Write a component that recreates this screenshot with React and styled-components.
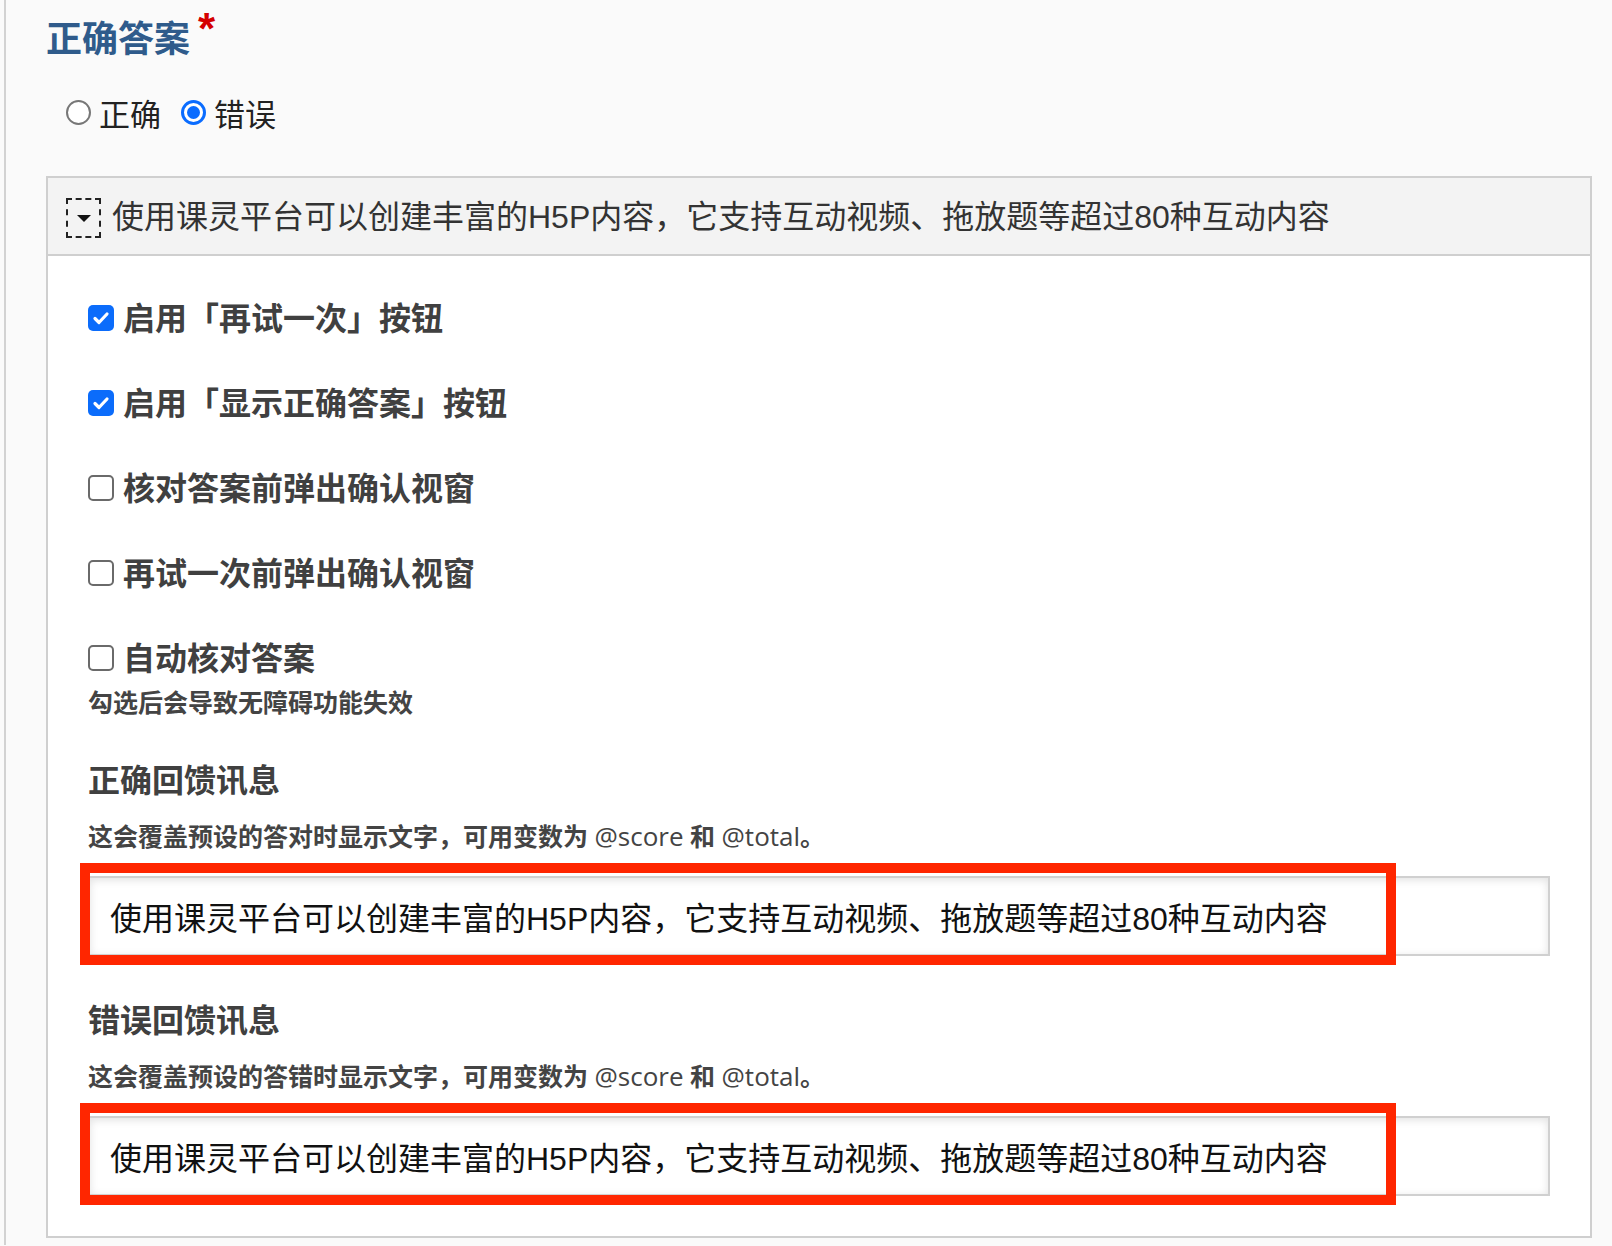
import React from "react";
import styled, { createGlobalStyle } from "styled-components";

const GlobalStyle = createGlobalStyle`
  html, body {
    margin: 0;
    padding: 0;
    background: #fafafa;
  }
  body {
    font-family: "Open Sans", "Noto Sans CJK SC", sans-serif;
  }
`;

const CJK = `"Noto Sans CJK SC", sans-serif`;
const MIXED = `"Liberation Sans", "Noto Sans CJK SC", sans-serif`;

const Page = styled.div`
  margin-left: 4px;
  border-left: 2px solid #d2d2d2;
  padding: 15px 20px 7px 40px;
  min-height: 1222px;
  box-sizing: border-box;
`;

const Title = styled.div`
  font-family: ${CJK};
  font-size: 36px;
  line-height: 42px;
  font-weight: 700;
  color: #2f5b8b;
  display: flex;
  align-items: flex-start;
`;

const Required = styled.span`
  color: #d40000;
  font-family: "Liberation Sans", sans-serif;
  font-size: 44px;
  font-weight: 700;
  line-height: 36px;
  margin-left: 8px;
  margin-top: -4px;
`;

const RadioRow = styled.div`
  display: flex;
  align-items: center;
  height: 40px;
  margin: 35px 0 0 20px;
  font-family: ${CJK};
  font-size: 31px;
  color: #222;
`;

const RadioLabel = styled.label`
  display: flex;
  align-items: center;
  gap: 8px;
  margin-right: 20px;
`;

const Radio = styled.span`
  width: 25px;
  height: 25px;
  box-sizing: border-box;
  border-radius: 50%;
  background: #fff;
  border: ${({ checked }) => (checked ? "3px solid #0a6cff" : "2px solid #777")};
  display: flex;
  align-items: center;
  justify-content: center;
  &::after {
    content: "";
    display: ${({ checked }) => (checked ? "block" : "none")};
    width: 13px;
    height: 13px;
    border-radius: 50%;
    background: #0a6cff;
  }
`;

const Section = styled.div`
  margin-top: 44px;
  border: 2px solid #cfcfcf;
  background: #fff;
`;

const SectionHeader = styled.div`
  display: flex;
  align-items: center;
  height: 72px;
  padding: 0 0 4px 18px;
  background: #f3f3f3;
  border-bottom: 2px solid #cfcfcf;
  font-family: ${MIXED};
  font-size: 32px;
  color: #333;
`;

const Toggle = styled.span`
  width: 35px;
  height: 40px;
  box-sizing: border-box;
  border: 2px dashed #222;
  display: flex;
  align-items: center;
  justify-content: center;
  margin: 8px 11px 0 0;
  &::after {
    content: "";
    border-left: 7px solid transparent;
    border-right: 7px solid transparent;
    border-top: 7px solid #111;
  }
`;

const SectionBody = styled.div`
  padding: 38px 40px 40px 40px;
`;

const CheckField = styled.label`
  display: flex;
  align-items: center;
  gap: 9px;
  height: 44px;
  margin-bottom: ${({ last }) => (last ? "8px" : "41px")};
  font-family: ${CJK};
  font-size: 32px;
  font-weight: 700;
  color: #404040;
`;

const Box = styled.span`
  width: 26px;
  height: 26px;
  box-sizing: border-box;
  border-radius: 5px;
  background: ${({ checked }) => (checked ? "#0b6cfb" : "#fff")};
  border: ${({ checked }) => (checked ? "none" : "2px solid #6a6a6a")};
  display: flex;
  align-items: center;
  justify-content: center;
  margin-top: 4px;
`;

const Hint = styled.div`
  font-family: "Open Sans", "Noto Sans CJK SC", sans-serif;
  font-size: 25px;
  line-height: 32px;
  font-weight: 600;
  color: #444;
  margin-top: ${({ top }) => top || 0}px;
`;

const Code = styled.span`
  font-weight: 400;
  font-size: 26px;
`;

const Heading = styled.div`
  font-family: ${CJK};
  font-size: 32px;
  line-height: 44px;
  font-weight: 700;
  color: #404040;
  margin-top: ${({ top }) => top}px;
`;

const InputWrap = styled.div`
  position: relative;
  margin-top: 24px;
`;

const TextInput = styled.div`
  height: 80px;
  box-sizing: border-box;
  border: 2px solid #d0d0d0;
  box-shadow: inset 0 2px 8px rgba(0, 0, 0, 0.12);
  background: #fff;
  display: flex;
  align-items: center;
  padding-left: 20px;
  font-family: ${MIXED};
  font-size: 32px;
  color: #111;
`;

const Highlight = styled.div`
  position: absolute;
  left: -8px;
  top: -13px;
  width: 1316px;
  height: 102px;
  box-sizing: border-box;
  border: 10px solid #ff2600;
  pointer-events: none;
`;

const Check = () => (
  <svg width="20" height="20" viewBox="0 0 20 20">
    <path
      d="M4 10.5l4 4L16 6"
      fill="none"
      stroke="#fff"
      strokeWidth="3.2"
      strokeLinecap="round"
      strokeLinejoin="round"
    />
  </svg>
);

const text = "使用课灵平台可以创建丰富的H5P内容，它支持互动视频、拖放题等超过80种互动内容";

const options = [
  { label: "启用「再试一次」按钮", checked: true },
  { label: "启用「显示正确答案」按钮", checked: true },
  { label: "核对答案前弹出确认视窗", checked: false },
  { label: "再试一次前弹出确认视窗", checked: false },
  { label: "自动核对答案", checked: false, last: true },
];

const Feedback = ({ title, verb, top }) => (
  <>
    <Heading top={top}>{title}</Heading>
    <Hint top={20}>
      这会覆盖预设的答{verb}时显示文字，可用变数为 <Code>@score</Code> 和 <Code>@total</Code>。
    </Hint>
    <InputWrap>
      <TextInput>{text}</TextInput>
      <Highlight />
    </InputWrap>
  </>
);

export default function App() {
  return (
    <>
      <GlobalStyle />
      <Page>
        <Title>
          正确答案<Required>*</Required>
        </Title>
        <RadioRow>
          <RadioLabel>
            <Radio />
            正确
          </RadioLabel>
          <RadioLabel>
            <Radio checked />
            错误
          </RadioLabel>
        </RadioRow>
        <Section>
          <SectionHeader>
            <Toggle />
            {text}
          </SectionHeader>
          <SectionBody>
            {options.map((o) => (
              <CheckField key={o.label} last={o.last}>
                <Box checked={o.checked}>{o.checked && <Check />}</Box>
                {o.label}
              </CheckField>
            ))}
            <Hint>勾选后会导致无障碍功能失效</Hint>
            <Feedback title="正确回馈讯息" verb="对" top={38} />
            <Feedback title="错误回馈讯息" verb="错" top={40} />
          </SectionBody>
        </Section>
      </Page>
    </>
  );
}
